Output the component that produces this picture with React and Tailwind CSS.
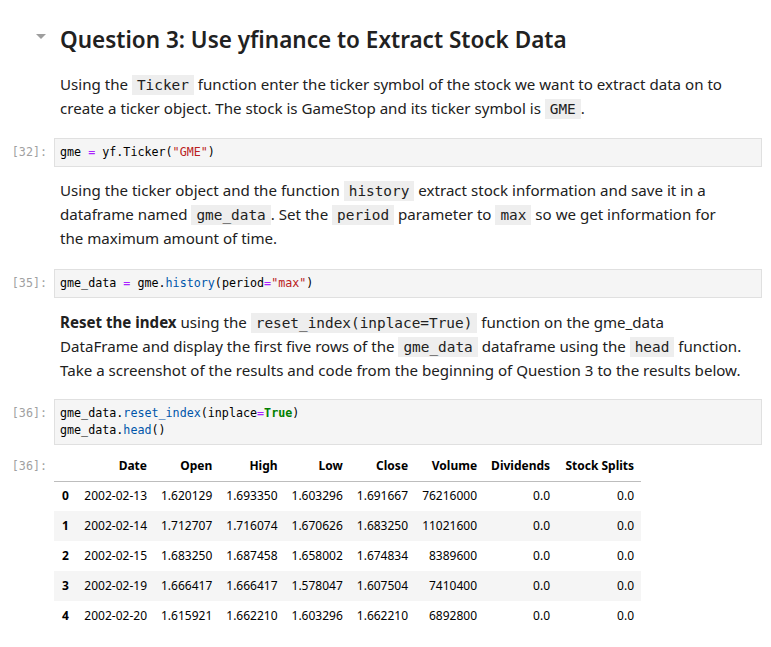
const sans = "font-['Noto_Sans',sans-serif]"
const mono = "font-['DejaVu_Sans_Mono',monospace]"

const Code = ({ children }) => (
    <code className={`${mono} bg-[#eeeeee] text-[14.4px] leading-[16px] px-[5px] py-[2px] text-[#212121]`}>
        {children}
    </code>
)

const Prompt = ({ n }) => (
    <div className={`${mono} w-[54px] shrink-0 pr-[7px] text-right text-[11.7px] leading-[17px] text-[#a0a0a0] pt-[6px]`}>
        [{n}]:
    </div>
)

const Cell = ({ n, children }) => (
    <div className="flex">
        <Prompt n={n} />
        <div className={`${mono} flex-1 mr-[9px] bg-[#f5f5f5] border border-[#e0e0e0] px-[5px] py-[5px] text-[11.7px] leading-[17px] text-black whitespace-pre`}>
            {children}
        </div>
    </div>
)

const Op = ({ children }) => <span className="text-[#aa22ff]">{children}</span>
const Str = ({ children }) => <span className="text-[#ba2121]">{children}</span>
const Prop = ({ children }) => <span className="text-[#0055aa]">{children}</span>

const columns = [
    { name: "", w: "w-[20px]" },
    { name: "Date", w: "w-[80px]" },
    { name: "Open", w: "w-[65px]" },
    { name: "High", w: "w-[65px]" },
    { name: "Low", w: "w-[65px]" },
    { name: "Close", w: "w-[65px]" },
    { name: "Volume", w: "w-[69px]" },
    { name: "Dividends", w: "w-[73px]" },
    { name: "Stock Splits", w: "w-[84px]" },
]

const rows = [
    ["0", "2002-02-13", "1.620129", "1.693350", "1.603296", "1.691667", "76216000", "0.0", "0.0"],
    ["1", "2002-02-14", "1.712707", "1.716074", "1.670626", "1.683250", "11021600", "0.0", "0.0"],
    ["2", "2002-02-15", "1.683250", "1.687458", "1.658002", "1.674834", "8389600", "0.0", "0.0"],
    ["3", "2002-02-19", "1.666417", "1.666417", "1.578047", "1.607504", "7410400", "0.0", "0.0"],
    ["4", "2002-02-20", "1.615921", "1.662210", "1.603296", "1.662210", "6892800", "0.0", "0.0"],
]

const Para = ({ className = "", children }) => (
    <p className={`${sans} pl-[60px] text-[15.1px] leading-[24px] text-[#212121] ${className}`}>
        {children}
    </p>
)

const App = () => {
    return (
        <div className="min-h-screen w-[771px] bg-white pt-[22px]">
            {/* Heading */}
            <div className="relative">
                <span className="absolute left-[36px] top-[12px] w-0 h-0 border-l-[5px] border-r-[5px] border-t-[5px] border-l-transparent border-r-transparent border-t-[#9e9e9e]"></span>
                <h1 className={`${sans} pl-[60px] text-[22.5px] leading-[36px] font-semibold text-[#212121]`}>
                    Question 3: Use yfinance to Extract Stock Data
                </h1>
            </div>

            <Para className="mt-[14px] mb-[18px]">
                Using the <Code>Ticker</Code> function enter the ticker symbol of the stock we want to extract data on to
                <br />
                create a ticker object. The stock is GameStop and its ticker symbol is <Code>GME</Code>.
            </Para>

            <Cell n="32">
                gme <Op>=</Op> yf.Ticker(<Str>"GME"</Str>)
            </Cell>

            <Para className="mt-[11px] mb-[19px]">
                Using the ticker object and the function <Code>history</Code> extract stock information and save it in a
                <br />
                dataframe named <Code>gme_data</Code>. Set the <Code>period</Code> parameter to <Code>max</Code> so we get information for
                <br />
                the maximum amount of time.
            </Para>

            <Cell n="35">
                gme_data <Op>=</Op> gme.<Prop>history</Prop>(period<Op>=</Op><Str>"max"</Str>)
            </Cell>

            <Para className="mt-[12px] mb-[17px]">
                <b className="font-bold">Reset the index</b> using the <Code>reset_index(inplace=True)</Code> function on the gme_data
                <br />
                DataFrame and display the first five rows of the <Code>gme_data</Code> dataframe using the <Code>head</Code> function.
                <br />
                Take a screenshot of the results and code from the beginning of Question 3 to the results below.
            </Para>

            <Cell n="36">
                gme_data.<Prop>reset_index</Prop>(inplace<Op>=</Op><span className="text-[#008000] font-bold">True</span>)
                {"\n"}gme_data.<Prop>head</Prop>()
            </Cell>

            {/* Output */}
            <div className="flex mt-[6px]">
                <div className={`${mono} w-[54px] shrink-0 pr-[7px] text-right text-[11.7px] leading-[30px] text-[#a0a0a0]`}>
                    [36]:
                </div>
                <table className={`${sans} text-[12px] text-black border-collapse table-fixed`}>
                    <thead>
                        <tr className="border-b border-[#bdbdbd] h-[30px]">
                            {columns.map((c) => (
                                <th key={c.name} className={`${c.w} px-[7px] text-right font-bold`}>
                                    {c.name}
                                </th>
                            ))}
                        </tr>
                    </thead>
                    <tbody>
                        {rows.map((r, i) => (
                            <tr key={r[0]} className={`h-[30px] ${i % 2 === 1 ? "bg-[#f5f5f5]" : ""}`}>
                                {r.map((v, j) =>
                                    j === 0 ? (
                                        <td key={j} className={`${columns[j].w} pl-[8px] text-left font-bold`}>
                                            {v}
                                        </td>
                                    ) : (
                                        <td key={j} className={`${columns[j].w} px-[7px] text-right`}>
                                            {v}
                                        </td>
                                    )
                                )}
                            </tr>
                        ))}
                    </tbody>
                </table>
            </div>
        </div>
    )
}

export default App
